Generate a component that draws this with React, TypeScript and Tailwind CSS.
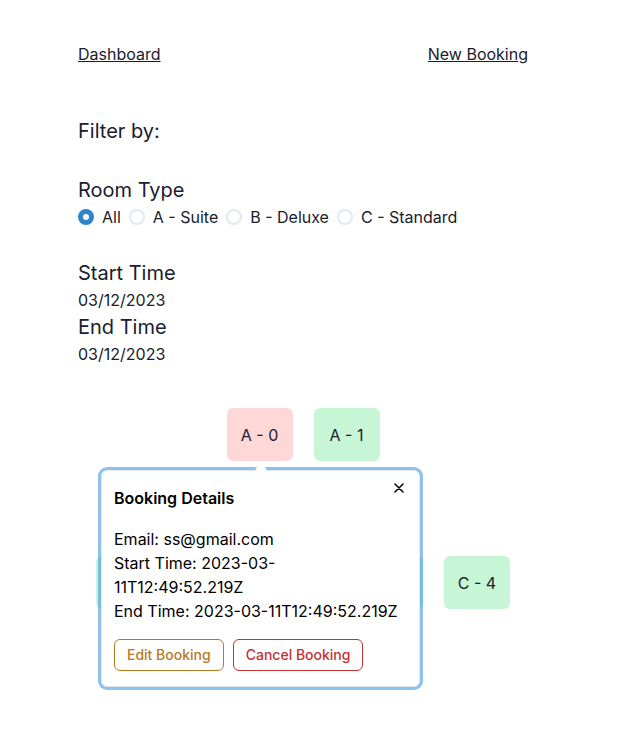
import React from "react";

function Radio({ label, checked }: { label: string; checked?: boolean }) {
  return (
    <label className="flex items-center gap-2">
      {checked ? (
        <span className="flex h-4 w-4 items-center justify-center rounded-full bg-[#3182ce]">
          <span className="h-[6px] w-[6px] rounded-full bg-white" />
        </span>
      ) : (
        <span className="h-4 w-4 rounded-full border-2 border-[#e2e8f0] bg-white" />
      )}
      <span>{label}</span>
    </label>
  );
}

function Card({ label, color }: { label?: string; color: string }) {
  return (
    <div className={`flex h-[53px] w-[66px] items-center justify-center rounded-md ${color}`}>
      {label}
    </div>
  );
}

export default function App() {
  return (
    <div
      className="min-h-[736px] bg-white text-[#1a202c]"
      style={{ fontFamily: "Inter, 'Noto Sans', sans-serif" }}
    >
      <div className="ml-[78px] w-[450px] pt-[42px] text-base leading-6">
        <div className="flex justify-between">
          <a className="underline">Dashboard</a>
          <a className="underline">New Booking</a>
        </div>

        <div className="mt-[51px] text-xl leading-7">Filter by:</div>

        <div className="mt-[31px] text-xl leading-7">Room Type</div>
        <div className="mt-px flex items-center gap-2">
          <Radio label="All" checked />
          <Radio label="A - Suite" />
          <Radio label="B - Deluxe" />
          <Radio label="C - Standard" />
        </div>

        <div className="mt-[30px] text-xl leading-7">Start Time</div>
        <div className="mt-px">03/12/2023</div>
        <div className="mt-px text-xl leading-7">End Time</div>
        <div className="mt-px">03/12/2023</div>

        <div className="relative mt-[42px]">
          <div className="flex justify-center gap-[21px]">
            <Card label="A - 0" color="bg-[#fed7d7]" />
            <Card label="A - 1" color="bg-[#c6f6d5]" />
          </div>
          <div className="mt-[95px] flex justify-center gap-[21px]">
            <Card color="bg-[#c6f6d5]" />
            <Card color="bg-[#c6f6d5]" />
            <Card color="bg-[#c6f6d5]" />
            <Card color="bg-[#c6f6d5]" />
            <Card label="C - 4" color="bg-[#c6f6d5]" />
          </div>

          <div className="absolute left-[23px] top-[62px] w-[319px] rounded-md border border-[#e2e8f0] bg-white shadow-[0_0_0_3px_rgba(66,153,225,0.6)]">
            <div className="absolute left-[155px] top-[-6px] h-2 w-2 rotate-45 bg-white" />
            <button className="absolute right-2 top-[5px] flex h-6 w-6 items-center justify-center">
              <svg width="10" height="10" viewBox="0 0 10 10">
                <path d="M1 1 L9 9 M9 1 L1 9" stroke="#000000" strokeWidth="1.5" strokeLinecap="round" />
              </svg>
            </button>
            <div className="px-3 pt-[15px] font-semibold text-black">Booking Details</div>
            <div className="mt-[17px] w-[299px] pl-3 text-black">
              <div>Email: ss@gmail.com</div>
              <div>Start Time: 2023-03-11T12:49:52.219Z</div>
              <div>End Time: 2023-03-11T12:49:52.219Z</div>
            </div>
            <div className="mt-4 flex gap-[9px] px-3 pb-[15px]">
              <button className="h-8 rounded-md border border-[#b7791f] px-3 text-sm font-medium text-[#b7791f]">
                Edit Booking
              </button>
              <button className="h-8 rounded-md border border-[#c53030] px-3 text-sm font-medium text-[#c53030]">
                Cancel Booking
              </button>
            </div>
          </div>
        </div>
      </div>
    </div>
  );
}
